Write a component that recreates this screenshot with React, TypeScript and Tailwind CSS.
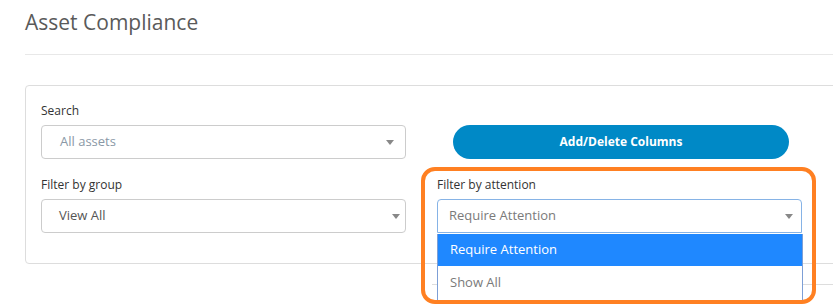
import React from "react";

const FONT = { fontFamily: '"Open Sans", "Liberation Sans", sans-serif' };

function Caret({ className }: { className?: string }) {
    return (
        <svg width="8" height="5" viewBox="0 0 8 5" className={className}>
            <path d="M0 0 L8 0 L4 5 Z" fill="#888" />
        </svg>
    );
}

type SelectProps = {
    value: string;
    textClass: string;
    caretClass: string;
    open?: boolean;
};

function FakeSelect({ value, textClass, caretClass, open }: SelectProps) {
    return (
        <div
            className={
                "relative flex h-[34px] w-[365px] items-center border bg-white text-[13px] " +
                (open
                    ? "rounded-t-[4px] border-[#86b3e6]"
                    : "rounded-[4px] border-[#cccccc]")
            }
        >
            <span className={textClass}>{value}</span>
            <Caret className={"absolute top-[14px] " + caretClass} />
        </div>
    );
}

export default function App() {
    return (
        <div className="relative h-[305px] w-[833px] overflow-hidden bg-white" style={FONT}>
            <div className="pl-[25px]">
                <div className="border-b border-[#e8e8e8] pt-[8px] pb-[18px]">
                    <h1 className="text-[21px] leading-[28px] text-[#5a5a5a]">Asset Compliance</h1>
                </div>

                <div className="mt-[30px] mr-[-12px] rounded-[4px] border border-[#dddddd] pl-[15px] pt-[17px] pb-[30px]">
                    <div className="flex gap-x-[31px]">
                        <div className="flex flex-col">
                            <label className="text-[12px] leading-[16px] text-[#333333]">Search</label>
                            <div className="mt-[6px]">
                                <FakeSelect
                                    value="All assets"
                                    textClass="pl-[18px] text-[#8a98a6]"
                                    caretClass="left-[344px]"
                                />
                            </div>
                        </div>
                        <div className="pt-[22px] pl-[16px]">
                            <button className="h-[34px] w-[336px] rounded-full bg-[#0089c6] text-[12px] font-bold text-white">
                                Add/Delete Columns
                            </button>
                        </div>
                    </div>

                    <div className="mt-[18px] flex gap-x-[31px]">
                        <div className="flex flex-col">
                            <label className="text-[12px] leading-[16px] text-[#333333]">Filter by group</label>
                            <div className="mt-[6px]">
                                <FakeSelect
                                    value="View All"
                                    textClass="pl-[17px] text-[#555555]"
                                    caretClass="left-[350px]"
                                />
                            </div>
                        </div>
                        <div className="relative flex flex-col">
                            <label className="text-[12px] leading-[16px] text-[#333333]">Filter by attention</label>
                            <div className="mt-[6px]">
                                <FakeSelect
                                    value="Require Attention"
                                    textClass="pl-[11px] text-[#7a7a7a]"
                                    caretClass="left-[347px]"
                                    open
                                />
                            </div>
                            <div className="absolute left-0 top-[57px] z-10 w-[366px] border border-t-0 border-[#7d9fd6] bg-white text-[13px]">
                                <div className="flex h-[32px] items-center bg-[#1f88ff] pl-[12px] text-white">
                                    Require Attention
                                </div>
                                <div className="flex h-[34px] items-center pl-[12px] text-[#7a7a7a]">Show All</div>
                            </div>
                        </div>
                    </div>
                </div>

                <div className="mt-[20px] ml-[407px] border-t border-[#dddddd]" />
            </div>

            <div className="absolute left-[421px] top-[167px] z-20 h-[137px] w-[395px] rounded-[14px] border-4 border-[#ff8022]" />
        </div>
    );
}
